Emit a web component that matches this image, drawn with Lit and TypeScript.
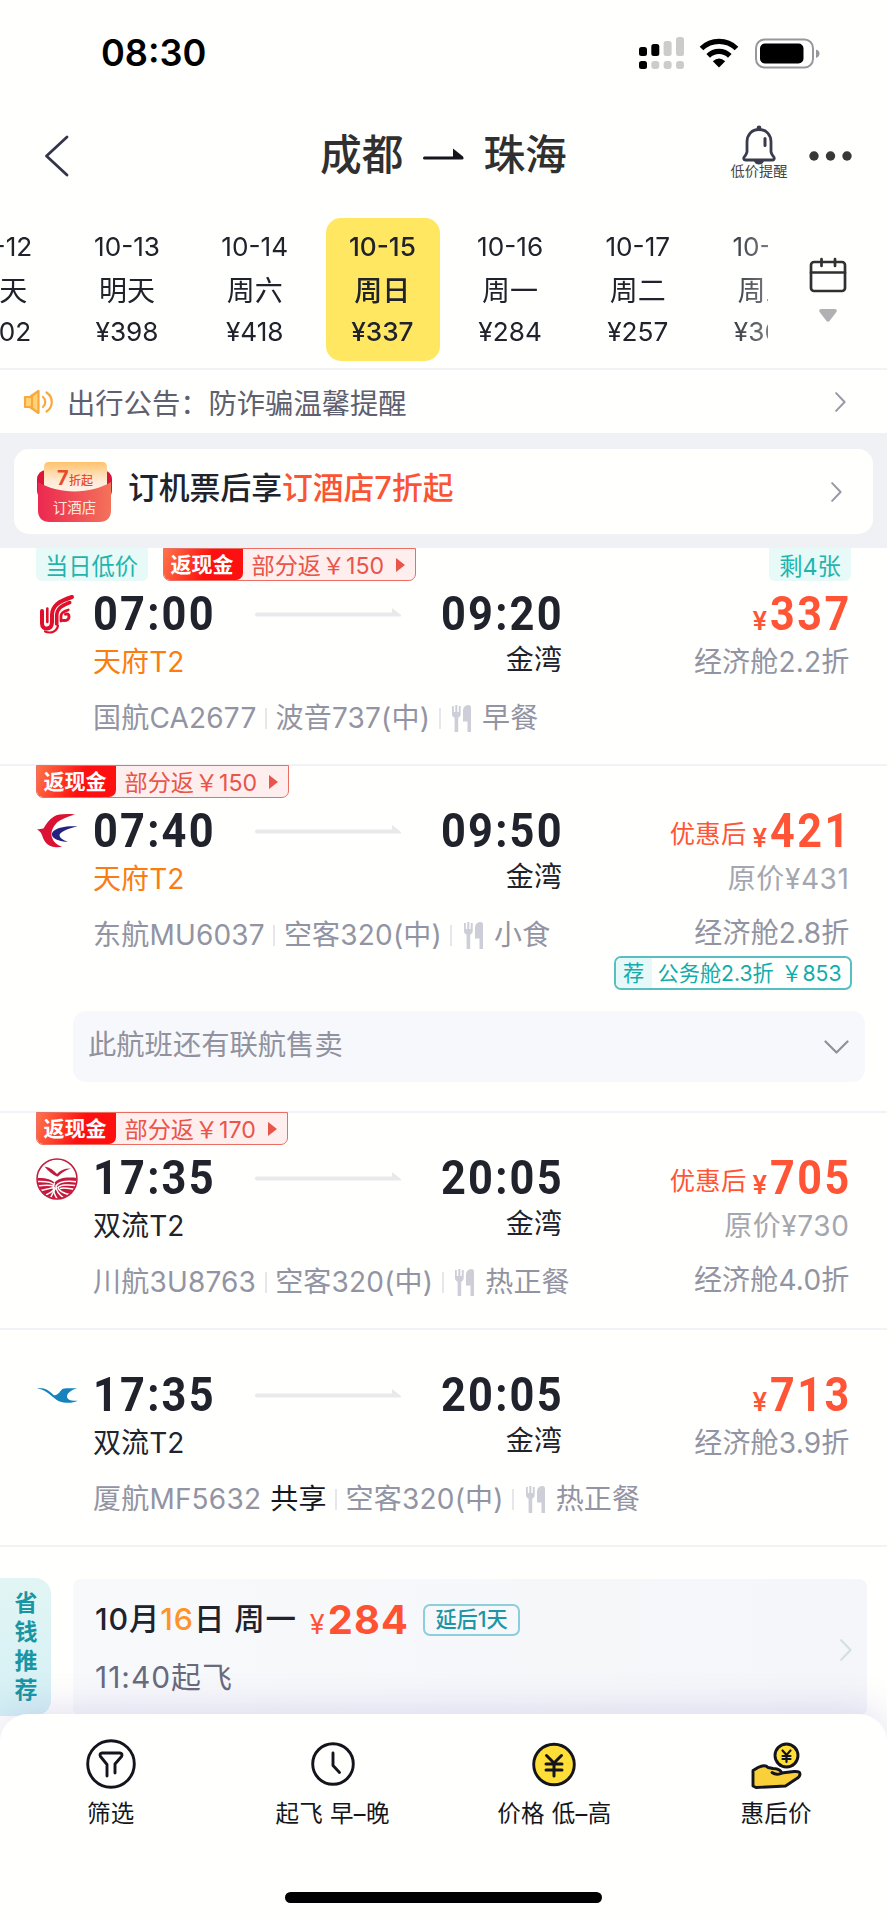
import { LitElement, html, svg, css, nothing } from "lit";
import { customElement, property } from "lit/decorators.js";
import { classMap } from "lit/directives/class-map.js";

interface Flight {
  airline: "ca" | "mu" | "3u" | "mf";
  lowest?: boolean;
  cashback?: string;
  left?: string;
  dep: string;
  arr: string;
  from: string;
  hot?: boolean;
  to: string;
  code: string;
  shared?: boolean;
  plane: string;
  meal: string;
  price: string;
  original?: string;
  cabin: string;
  business?: [string, string];
  more?: string;
}

const FLIGHTS: Flight[] = [
  { airline: "ca", lowest: true, cashback: "150", left: "剩4张", dep: "07:00", arr: "09:20", from: "天府T2", hot: true, to: "金湾", code: "国航CA2677", plane: "波音737(中)", meal: "早餐", price: "337", cabin: "经济舱2.2折" },
  { airline: "mu", cashback: "150", dep: "07:40", arr: "09:50", from: "天府T2", hot: true, to: "金湾", code: "东航MU6037", plane: "空客320(中)", meal: "小食", price: "421", original: "431", cabin: "经济舱2.8折", business: ["公务舱2.3折", "￥853"], more: "此航班还有联航售卖" },
  { airline: "3u", cashback: "170", dep: "17:35", arr: "20:05", from: "双流T2", to: "金湾", code: "川航3U8763", plane: "空客320(中)", meal: "热正餐", price: "705", original: "730", cabin: "经济舱4.0折" },
  { airline: "mf", dep: "17:35", arr: "20:05", from: "双流T2", to: "金湾", code: "厦航MF5632", shared: true, plane: "空客320(中)", meal: "热正餐", price: "713", cabin: "经济舱3.9折" },
];

const DAYS = [
  ["10-12", "今天", "¥402"],
  ["10-13", "明天", "¥398"],
  ["10-14", "周六", "¥418"],
  ["10-15", "周日", "¥337"],
  ["10-16", "周一", "¥284"],
  ["10-17", "周二", "¥257"],
  ["10-18", "周三", "¥308"],
];

const LOGOS = {
  ca: svg`<g fill="none" stroke="#e0102a" stroke-linecap="round" stroke-linejoin="round">
    <path d="M6 17v12.500c0 3.500 2.500 5.500 5.500 5s4.500-3 4.500-6.500V20.500C16.500 12 22 7.500 36 3" stroke-width="4"/>
    <path d="M11.300 14.500V28" stroke-width="2.600"/>
    <path d="M20.700 30V21c.5-6 4-9 13-12.500" stroke-width="3.600"/>
    <path d="M25 27v-5c0-3 2-4.500 7.200-6" stroke-width="2.800"/>
    <path d="M27 26.500c4 .5 6-1 6-3.800s-2-3-3.500-2.500" stroke-width="3"/>
    <path d="M9 37.500c6 2.500 12 0 13-6" stroke-width="2.200"/></g>`,
  mu: svg`<path d="M39 3.500C31 2.500 22 3 18 5.500 13 8.500 10 13 7.500 17.500L1 18.500c3 1.300 4.500 4 5.500 7 1.700 5.500 5.500 9.800 11.500 10.500 4 .4 6 .2 8-.2-5-1.600-8.500-4.800-10-9.300-1.500-5 .2-10 5-15C25 8.500 31 5.500 39 3.500z" fill="#dc1234"/>
    <path d="M41.500 15.500C33 14.500 22 16 17.500 20c-3.500 3.500-1 7.500 5 9.300 3.300 1 6.500 1.500 9.500 1.700-5-2-8-4-8.500-6.300-.3-3.500 8.500-7.500 18-9.200z" fill="#24217f"/>`,
  "3u": svg`<clipPath id="disc"><circle cx="21" cy="21" r="19.600"/></clipPath>
    <g clip-path="url(#disc)"><path d="M0 20c9-.5 16 1 18.500 5C21 20.500 29 18.500 42 20v22H0z" fill="#c3193c"/>
    <g fill="none" stroke="#fffffd" stroke-width="1.500"><path d="M0 23.500c10-.5 16 0 18 3.500"/><path d="M1 28c8-1 14-1.500 17 .5"/><path d="M3 33c7-1.500 12-3 16-3.500"/><path d="M8 38c5-2 9-5 12-8"/><path d="M18.500 25c-2.500 6-1 11 3.500 17"/><path d="M42 24c-11-1.500-19-.5-22 4 0 4 2 8 8 12"/><path d="M42 28c-10-2-18-1-20 1.500 1 3.500 4 5.500 11 7"/><path d="M40 32c-8-2-12-2.500-16-1.500"/><path d="M14 42c1-4 3-7 5-11"/></g></g>
    <circle cx="21" cy="21" r="20" fill="none" stroke="#c3193c" stroke-width="1.500"/>
    <path d="M8.500 8.500c5.500 1 9.500 3.800 12.500 7.500 3-3.700 7.500-5.700 14-5.500-5 1.300-8.500 4-11.500 6.500-.8.800-1.500 1.700-2.500 1.500C17 17 12.500 13.500 8.500 8.500z" fill="#c3193c"/>`,
  mf: svg`<path d="M1 13.500c6-1 11 .5 16.500 6.500 2 .8 5-.8 7-4 1.500-2.200 3-2.800 6-2.800H41c-6 2-9.500 4.500-10 8-.2 3.500 4 5 10.500 4.600-5 2.600-12 2.700-18.500.4C15.500 22.500 12 15 1 13.500z" fill="#1583bd"/>`,
};

const chevron = (cls: string) => html`<svg class=${cls} viewBox="0 0 12 22"><path d="M1.200 1.200 10.500 11 1.200 20.800" fill="none" stroke="currentColor" stroke-width="2.100" stroke-linecap="round" stroke-linejoin="round"/></svg>`;

@customElement("flight-card")
export class FlightCard extends LitElement {
  @property({ attribute: false }) flight!: Flight;

  static styles = css`
    :host { display: block; border-top: 2px solid #f2f2f7; height: 215px; color: #20222c; }
    :host(.first) { border-top: 0; height: 216px; }
    :host(.tall) { height: 345px; }
    .tags { height: 32px; display: flex; align-items: stretch; padding: 0 36px 0 35.500px; }
    :host(.first) .tags { height: 33px; }
    .low, .left { background: #e8faf8; color: #1fb5ae; font-size: 23.300px; line-height: 37px; height: 33px; border-radius: 0 0 6px 6px; text-align: center; }
    .low { width: 112px; margin-right: 15px; }
    .left { width: 82px; margin-left: auto; }
    .cash { display: flex; box-sizing: border-box; height: 33px; margin-top: -1px; border: 1.500px solid #ec6e62; border-radius: 0 0 7px 7px; background: #ffeeee; color: #ea5549; overflow: hidden; }
    :host(.first) .cash { margin-top: 0; }
    .cash-l { width: 79px; background: linear-gradient(110deg, #ff7448, #fe1010 55%); color: #fff; font-weight: 700; font-size: 21px; line-height: 31px; text-indent: -2px; text-align: center; border-radius: 0 0 7px 0; }
    .cash-r { display: flex; align-items: center; font-size: 23.200px; line-height: 36px; padding: 3px 9px 0 9px; }
    .yen { width: 25px; text-align: center; }
    .tri { width: 10px; height: 14px; margin: 0 1px 3px 11px; fill: #ea5549; }
    .body { display: flex; }
    .logo { width: 57px; padding-left: 36px; padding-top: 13px; }
    .logo svg { display: block; width: 42px; height: 42px; }
    .route { width: 469px; }
    .times { height: 66px; display: flex; align-items: center; justify-content: space-between; }
    .time { display: block; width: 121px; font: 700 49px/66px Roboto, sans-serif; letter-spacing: 2.500px; transform: scaleX(.885); transform-origin: 0 50%; white-space: nowrap; }
    .arrow { width: 146px; height: 10px; margin-bottom: 2px; fill: #e9e9ec; }
    .ports { display: flex; justify-content: space-between; font-size: 28px; letter-spacing: .1px; line-height: 30px; height: 30px; }
    .hot { color: #fa7d14; }
    .to { margin-top: -2px; }
    .info { display: flex; align-items: center; white-space: nowrap; margin-top: 26px; height: 30px; line-height: 30px; font-size: 28px; letter-spacing: .2px; color: #9294a3; }
    .bar { flex: none; width: 2px; height: 21px; background: #e6e6ec; margin: 0 8.500px; }
    .meal { flex: none; width: 19px; height: 27px; margin: 0 11px 0 3px; fill: #cdced8; }
    .share { color: #15161f; margin-left: 9px; }
    .fare { flex: 1; display: flex; flex-direction: column; align-items: flex-end; padding-right: 37.500px; white-space: nowrap; }
    .price { height: 66px; display: flex; align-items: baseline; color: #ff5436; }
    .after { font-size: 25.300px; margin-right: 6px; letter-spacing: .3px; transform: translateY(-4px); }
    .cny { font-size: 26px; font-weight: 600; width: 17px; }
    .amount { display: block; width: 80px; font: 700 49px/66px Roboto, sans-serif; letter-spacing: 2.800px; transform: scaleX(.88); transform-origin: 0 50%; }
    .sub { height: 30px; line-height: 30px; font-size: 28px; color: #9294a3; letter-spacing: .2px; }
    .orig { color: #a4a6b0; letter-spacing: .6px; }
    .cabin2 { margin-top: 24px; }
    .biz { box-sizing: border-box; margin-top: 8px; margin-right: -2px; height: 34px; width: 238px; display: flex; border: 2px solid #58bfc0; border-radius: 7px; color: #12acab; font-size: 21.200px; line-height: 30px; overflow: hidden; }
    .rec { width: 36px; background: #e6f8f7; text-align: center; }
    .bt { flex: 1; display: flex; justify-content: space-between; padding: 0 8px 0 6px; }
    .more { margin: 21px 22px 0 73px; height: 71px; border-radius: 13px; background: #f7f8fb; display: flex; align-items: center; justify-content: space-between; padding: 0 16px 0 15px; font-size: 28.300px; color: #9092a0; line-height: 68px; }
    .more span { margin-top: -3px; }
    .down { width: 25px; height: 14px; color: #8e909c; }
  `;

  render() {
    const f = this.flight;
    return html`
      <div class="tags">
        ${f.lowest ? html`<span class="low">当日低价</span>` : nothing}
        ${f.cashback ? html`<div class="cash"><span class="cash-l">返现金</span><span class="cash-r"><span>部分返</span><span class="yen">￥</span><span>${f.cashback}</span><svg class="tri" viewBox="0 0 10 14"><path d="M1 0 10 7 1 14z"/></svg></span></div>` : nothing}
        ${f.left ? html`<span class="left">${f.left}</span>` : nothing}
      </div>
      <div class="body">
        <div class="logo"><svg viewBox="0 0 42 42">${LOGOS[f.airline]}</svg></div>
        <div class="route">
          <div class="times"><span class="time">${f.dep}</span><svg class="arrow" viewBox="0 0 146 10"><path d="M2 4.500H137V0l9 7q1 1.500-1 1.500H2a2 2 0 0 1 0-4z"/></svg><span class="time">${f.arr}</span></div>
          <div class="ports"><span class=${classMap({ hot: !!f.hot })}>${f.from}</span><span class="to">${f.to}</span></div>
          <div class="info"><span>${f.code}</span>${f.shared ? html`<span class="share">共享</span>` : nothing}<i class="bar"></i><span>${f.plane}</span><i class="bar"></i><svg class="meal" viewBox="0 0 19 27"><path d="M0 1h1.800v6h1.500V0h2v7h1.500V1h1.900v8c0 2-1 3-2.500 3.700V26a1.800 1.800 0 0 1-3.600 0V12.700C1 12 0 11 0 9zM11 6c0-4 2.500-6 5.500-6 1.500 0 2.500 1 2.500 2.500V26a1.700 1.700 0 0 1-3.500 0v-9.500H11z"/></svg><span>${f.meal}</span></div>
        </div>
        <div class="fare">
          <div class="price">${f.original ? html`<span class="after">优惠后</span>` : nothing}<span class="cny">¥</span><span class="amount">${f.price}</span></div>
          ${f.original ? html`<div class="sub orig">原价¥${f.original}</div><div class="sub cabin2">${f.cabin}</div>` : html`<div class="sub">${f.cabin}</div>`}
          ${f.business ? html`<div class="biz"><span class="rec">荐</span><span class="bt"><span>${f.business[0]}</span><span>${f.business[1]}</span></span></div>` : nothing}
        </div>
      </div>
      ${f.more ? html`<div class="more"><span>${f.more}</span><svg class="down" viewBox="0 0 25 14"><path d="M1.500 1.500 12.500 12.500 23.500 1.500" fill="none" stroke="currentColor" stroke-width="2.200" stroke-linecap="round" stroke-linejoin="round"/></svg></div>` : nothing}
    `;
  }
}

@customElement("app-root")
export class AppRoot extends LitElement {
  static styles = css`
    :host { display: flex; flex-direction: column; width: 887px; height: 1920px; overflow: hidden; background: #fffffd; color: #20222c; font-family: Inter, "Noto Sans CJK SC", sans-serif; white-space: nowrap; }
    .status { height: 106px; flex: none; display: flex; align-items: center; padding: 0 67px 0 101px; }
    .clock { font-size: 36.200px; font-weight: 600; line-height: 106px; color: #000; margin-right: auto; }
    .signal { width: 46px; height: 32px; margin-right: 14px; }
    .wifi { width: 40px; height: 30px; margin-right: 16px; }
    .battery { width: 65px; height: 31px; }
    .head { height: 100px; flex: none; display: flex; align-items: center; padding: 0 35px 0 44px; }
    .back { width: 25px; height: 42px; }
    .title { flex: 1; display: flex; align-items: center; padding-left: 251px; font-size: 41.700px; font-weight: 500; color: #303030; line-height: 60px; margin-top: -3px; }
    .to-arrow { width: 41px; height: 12px; margin: 0 19px 2px 20px; }
    .alert { display: flex; flex-direction: column; align-items: center; width: 58px; margin-right: 21px; margin-top: -9px; }
    .bell { width: 36px; height: 40px; }
    .alert span { font-size: 14.200px; line-height: 14px; margin-top: -1px; color: #444; }
    .dots { width: 43px; height: 10px; }
    .dates { height: 164px; flex: none; display: flex; border-bottom: 2px solid #f3f3f6; box-sizing: border-box; overflow: hidden; }
    .strip { width: 768px; display: flex; overflow: hidden; padding-top: 12px; box-sizing: border-box; -webkit-mask-image: linear-gradient(90deg, #000 720px, rgba(0,0,0,.6)); mask-image: linear-gradient(90deg, #000 720px, rgba(0,0,0,.6)); }
    .day { flex: none; width: 127.700px; height: 143px; }
    .day:first-child { margin-left: -64.500px; }
    .cell { width: 114px; height: 143px; margin: 0 auto; border-radius: 15px; display: flex; flex-direction: column; align-items: center; font-size: 26.200px; line-height: 40px; padding-top: 9px; box-sizing: border-box; }
    .cell .w { font-size: 28px; line-height: 48px; }
    .cell .p { line-height: 34px; }
    .sel { background: #ffe762; font-weight: 500; margin-left: 7.300px; padding-right: 1px; }
    .cal { flex: 1; display: flex; flex-direction: column; align-items: center; padding-top: 51px; }
    .calendar { width: 38px; height: 36px; }
    .drop { width: 18px; height: 13px; margin-top: 16px; fill: #b1b1b3; }
    .notice { height: 63px; flex: none; display: flex; align-items: center; padding: 0 40px 0 23px; box-sizing: border-box; color: #5e606f; font-size: 28.300px; }
    .speaker { width: 31px; height: 26px; margin-right: 13px; }
    .notice span { flex: 1; margin-top: -1px; }
    .chev { width: 13px; height: 20px; color: #9698a5; }
    .promo-wrap { flex: none; height: 115px; background: #f0f1f5; padding: 16px 14px 0; box-sizing: border-box; }
    .promo { height: 85px; border-radius: 15px; background: #fffffd; display: flex; align-items: center; padding: 0 30px 0 23px; }
    .coupon { width: 75px; height: 62px; margin-right: 16px; }
    .promo-text { flex: 1; font-size: 30.800px; font-weight: 500; line-height: 40px; margin-top: -7px; }
    .promo-text em, .rec-line em { font-style: normal; color: #fb5435; }
    .rec-wrap { display: flex; height: 169px; box-sizing: border-box; border-top: 2px solid #f2f2f7; padding-top: 31px; flex: none; align-items: flex-start; }
    .side { width: 51px; height: 138px; border-radius: 0 16px 16px 0; background: linear-gradient(#e2f5f4, #d4f0f4); display: flex; flex-direction: column; align-items: center; padding: 11px 0 0 1px; box-sizing: border-box; font-size: 23px; line-height: 29px; font-weight: 700; color: #1896a4; margin-right: 22px; }
    .rec { width: 794px; height: 137px; margin-top: 1px; border-radius: 8px; background: linear-gradient(90deg, #f8f9fb, #f5f6f9); padding: 20px 15px 0 22px; box-sizing: border-box; display: flex; }
    .rec-main { flex: 1; }
    .rec-line { display: flex; align-items: baseline; font-size: 30.400px; letter-spacing: .9px; font-weight: 500; line-height: 42px; height: 42px; }
    .date { transform: translateY(-4px); }
    .rec-line em { color: #ff9327; }
    .rc { color: #ff5232; font-weight: 400; font-size: 27px; margin-left: 13px; letter-spacing: 0; }
    .ra { color: #ff5232; font-weight: 700; font-size: 39.800px; margin-left: 3px; margin-right: 14px; letter-spacing: 1.200px; }
    .later { box-sizing: border-box; height: 32px; width: 97px; text-align: center; align-self: center; border: 2px solid #8ccfdb; border-radius: 7px; font-size: 21.200px; line-height: 27px; letter-spacing: 0; color: #1c96a6; font-weight: 500; }
    .depart { font-size: 29.900px; letter-spacing: 1px; line-height: 40px; color: #686a7d; margin-top: 16px; }
    .chev2 { width: 12px; height: 24px; margin-top: 39px; color: #d4e0da; }
    .sheet { position: relative; flex: 1; background: #fffffe; border-radius: 28px 28px 0 0; box-shadow: 0 -6px 36px rgba(95, 85, 190, .17); display: flex; flex-direction: column; align-items: center; }
    .tabs { width: 887px; height: 178px; display: grid; grid-template-columns: repeat(4, 1fr); }
    .tab { display: flex; flex-direction: column; align-items: center; padding-top: 24px; font-size: 23.500px; letter-spacing: .3px; line-height: 30px; color: #15161c; }
    .tab svg { width: 52px; height: 52px; margin-bottom: 9px; }
    .home { width: 317px; height: 11px; border-radius: 6px; background: #000; }
  `;

  private tab(icon: unknown, label: string) {
    return html`<div class="tab"><svg viewBox="0 0 52 52" fill="none" stroke="#14151c" stroke-width="2.900" stroke-linecap="round" stroke-linejoin="round">${icon}</svg><span>${label}</span></div>`;
  }

  render() {
    return html`
      <div class="status">
        <span class="clock">08:30</span>
        <svg class="signal" viewBox="0 0 46 32"><g fill="#000"><rect x="0" y="10" width="8" height="9" rx="2.500"/><rect x="12.300" y="7" width="8" height="12" rx="2.500"/><rect x="0" y="24" width="8" height="8" rx="2.500"/></g><g fill="#ccc"><rect x="24.600" y="4" width="8" height="15" rx="2.500"/><rect x="37" y="0" width="8" height="19" rx="2.500"/><rect x="12.300" y="24" width="8" height="8" rx="3"/><rect x="24.600" y="24" width="8" height="8" rx="3"/><rect x="37" y="24" width="8" height="8" rx="3"/></g></svg>
        <svg class="wifi" viewBox="0 0 40 30"><g fill="none" stroke="#000" stroke-width="5.200"><path d="M2.500 10.500a25 25 0 0 1 35 0"/><path d="M9.200 17.800a15.500 15.500 0 0 1 21.600 0"/></g><path d="M13.800 23.300q6.200-5.500 12.400 0L20 29.500z"/></svg>
        <svg class="battery" viewBox="0 0 65 31"><rect x="1" y="1.500" width="57" height="28" rx="8.500" fill="none" stroke="#97979f" stroke-width="2"/><rect x="5" y="5.500" width="43.500" height="20" rx="5" fill="#000"/><path d="M61 11.500q3.500 1 3.500 4t-3.500 4.500z" fill="#97979f"/></svg>
      </div>
      <div class="head">
        <svg class="back" viewBox="0 0 25 42"><path d="M23 2 2.500 21 23 40" fill="none" stroke="#34344a" stroke-width="2.800" stroke-linecap="round" stroke-linejoin="round"/></svg>
        <div class="title"><span>成都</span><svg class="to-arrow" viewBox="0 0 41 12"><path d="M1.500 8.500H30V.5l10 8q1.500 3-1 3h-37.500a1.500 1.500 0 0 1 0-3z" fill="#15151c"/></svg><span>珠海</span></div>
        <div class="alert"><svg class="bell" viewBox="0 0 36 40"><path d="M18 4.500c-7.500 0-12 5.500-12 12.500v9.500c0 2-1.200 3.500-2.800 5.500-.8 1.300-.5 3 1.300 3h27c1.800 0 2.100-1.700 1.300-3-1.600-2-2.800-3.500-2.800-5.500V17c0-7-4.500-12.500-12-12.500z" fill="none" stroke="#3a3b4c" stroke-width="2.800"/><circle cx="18" cy="2.800" r="2.300" fill="#3a3b4c"/><path d="M12.500 35h11q-1.500 4.500-5.500 4.500T12.500 35z" fill="#3a3b4c"/><path d="M24 13.500v7" stroke="#3a3b4c" stroke-width="3" stroke-linecap="round"/></svg><span>低价提醒</span></div>
        <svg class="dots" viewBox="0 0 43 10" fill="#383838"><circle cx="5" cy="5" r="4.700"/><circle cx="21.500" cy="5" r="4.700"/><circle cx="38" cy="5" r="4.700"/></svg>
      </div>
      <div class="dates">
        <div class="strip">${DAYS.map((d, i) => html`<div class="day"><div class=${classMap({ cell: true, sel: i === 3 })}><span>${d[0]}</span><span class="w">${d[1]}</span><span class="p">${d[2]}</span></div></div>`)}</div>
        <div class="cal">
          <svg class="calendar" viewBox="0 0 38 36"><g fill="none" stroke="#2f3032" stroke-width="2.700" stroke-linecap="round"><rect x="2" y="5" width="34" height="29" rx="3"/><path d="M2 15.500h34M12.500 2v7M26 2v7"/></g></svg>
          <svg class="drop" viewBox="0 0 18 13"><path d="M2 0h14q3 .5 1 3.500L10.500 12q-1.500 1.500-3 0L1 3.500Q-1 .5 2 0z"/></svg>
        </div>
      </div>
      <div class="notice">
        <svg class="speaker" viewBox="0 0 31 26"><path d="M2 8h5l8.500-6v22L7 18H2z" fill="#ffd574" stroke="#f9a73e" stroke-width="2.200" stroke-linejoin="round"/><path d="M9 6.500v13M20 8c3 2.500 3 7.500 0 10M23.500 3.500c7 4.500 7 14.500 0 19" fill="none" stroke="#f9a73e" stroke-width="2.200" stroke-linecap="round"/></svg>
        <span>出行公告：防诈骗温馨提醒</span>${chevron("chev")}
      </div>
      <div class="promo-wrap"><div class="promo">
        <svg class="coupon" viewBox="0 0 75 62"><defs><linearGradient id="rg"><stop offset="0" stop-color="#ec2850"/><stop offset="1" stop-color="#f4725a"/></linearGradient><linearGradient id="og" x2="0" y2="1"><stop offset="0" stop-color="#ffc36c"/><stop offset=".6" stop-color="#ffead5"/><stop offset="1" stop-color="#fff4ea"/></linearGradient></defs><rect x="0" y="9" width="75" height="30" rx="9" fill="#da1538"/><path d="M7 6q0-5 5-5h53q5 0 5 5v26H7z" fill="url(#og)"/><path d="M1 21c20 12.500 53 12.500 73 0v28q0 12-12 12H13Q1 61 1 49z" fill="url(#rg)"/><text x="20" y="23.500" font-family="Inter" font-weight="700" font-size="20" fill="#e84b2a">7</text><text x="32" y="23.500" font-family="Noto Sans CJK SC" font-weight="500" font-size="12" fill="#e84b2a">折起</text><text x="37.500" y="52" text-anchor="middle" font-family="Noto Sans CJK SC" font-size="14.500" fill="#ffe9dc">订酒店</text></svg>
        <span class="promo-text">订机票后享<em>订酒店7折起</em></span>${chevron("chev")}
      </div></div>
      ${FLIGHTS.map((f, i) => html`<flight-card class=${classMap({ first: i === 0, tall: !!f.more })} .flight=${f}></flight-card>`)}
      <div class="rec-wrap">
        <div class="side"><span>省</span><span>钱</span><span>推</span><span>荐</span></div>
        <div class="rec"><div class="rec-main">
          <div class="rec-line"><span class="date">10月<em>16</em>日 周一</span><span class="rc">¥</span><span class="ra">284</span><span class="later">延后1天</span></div>
          <div class="depart">11:40起飞</div></div>${chevron("chev2")}</div>
      </div>
      <div class="sheet">
        <div class="tabs">
          ${this.tab(svg`<circle cx="26" cy="26" r="23.300"/><path d="M22 38V26.500L15.500 18.500q-1.500-3 1.500-3.500h18q3 .5 1.500 3.500L30 26v9" />`, "筛选")}
          ${this.tab(svg`<circle cx="26" cy="26" r="20.300"/><path d="M26 15v12.500l6.500 7"/>`, "起飞 早–晚")}
          ${this.tab(svg`<circle cx="26" cy="26.500" r="20.300" fill="#ffdf37"/><path d="M18.500 17.500 26 25l7.500-7.500M26 25v13M18 26h16M18 32h16" stroke-width="3"/>`, "价格 低–高")}
          ${this.tab(svg`<circle cx="36.500" cy="17.500" r="11.500" fill="#ffdf37"/><path d="m32.500 12.500 4 4.500 4-4.500M36.500 17V24M32.500 18h8M32.500 21h8" stroke-width="2.200"/><path d="M3 32.500 8 29.500q7-3.500 10 0l5 1q8 .5 8.500 4.500l12.500-1.500q6-.5 6 2.500 0 3-4 5L35.500 48 6 49.500 3 48z" fill="#fad03a"/><path d="M22 34.500q4 3 9 1"/>`, "惠后价")}
        </div>
        <div class="home"></div>
      </div>
    `;
  }
}
